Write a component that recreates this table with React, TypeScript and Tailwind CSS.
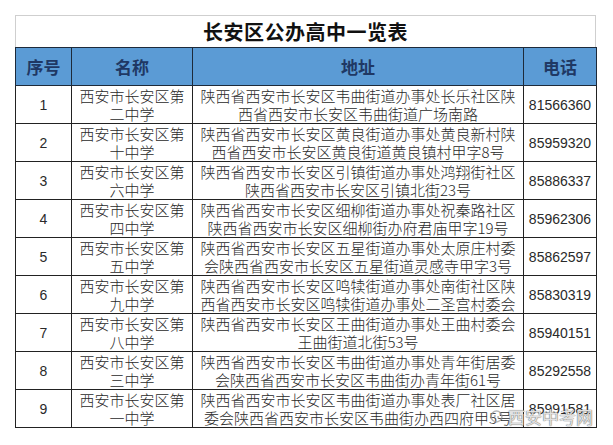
const rows = [
  { no: '1', name: ['西安市长安区第', '二中学'], addr: ['陕西省西安市长安区韦曲街道办事处长乐社区陕', '西省西安市长安区韦曲街道广场南路'], tel: '81566360' },
  { no: '2', name: ['西安市长安区第', '十中学'], addr: ['陕西省西安市长安区黄良街道办事处黄良新村陕', '西省西安市长安区黄良街道黄良镇村甲字8号'], tel: '85959320' },
  { no: '3', name: ['西安市长安区第', '六中学'], addr: ['陕西省西安市长安区引镇街道办事处鸿翔街社区', '陕西省西安市长安区引镇北街23号'], tel: '85886337' },
  { no: '4', name: ['西安市长安区第', '四中学'], addr: ['陕西省西安市长安区细柳街道办事处祝秦路社区', '陕西省西安市长安区细柳街办府君庙甲字19号'], tel: '85962306' },
  { no: '5', name: ['西安市长安区第', '五中学'], addr: ['陕西省西安市长安区五星街道办事处太原庄村委', '会陕西省西安市长安区五星街道灵感寺甲字3号'], tel: '85862597' },
  { no: '6', name: ['西安市长安区第', '九中学'], addr: ['陕西省西安市长安区鸣犊街道办事处南街社区陕', '西省西安市长安区鸣犊街道办事处二圣宫村委会'], tel: '85830319' },
  { no: '7', name: ['西安市长安区第', '八中学'], addr: ['陕西省西安市长安区王曲街道办事处王曲村委会', '王曲街道北街53号'], tel: '85940151' },
  { no: '8', name: ['西安市长安区第', '三中学'], addr: ['陕西省西安市长安区韦曲街道办事处青年街居委', '会陕西省西安市长安区韦曲街办青年街61号'], tel: '85292558' },
  { no: '9', name: ['西安市长安区第', '一中学'], addr: ['陕西省西安市长安区韦曲街道办事处表厂社区居', '委会陕西省西安市长安区韦曲街办西四府甲5号'], tel: '85991581' },
]

const cjk = { fontFamily: '"Noto Sans CJK SC", "Noto Sans", sans-serif' }
const num = { fontFamily: '"Liberation Sans", "DejaVu Sans", sans-serif' }

export default function App() {
  return (
    <div className="min-h-[445px] w-[613px] bg-white pl-[15px] pt-[15px]" style={cjk}>
      <div className="relative w-[581px]">
        <div className="flex h-[32px] items-center justify-center border border-b-0 border-[#cfcfcf]">
          <span className="text-[20px] font-semibold leading-none tracking-[0.5px] text-[#111]">
            长安区公办高中一览表
          </span>
        </div>
        <table className="w-[581px] table-fixed border-collapse">
          <colgroup>
            <col className="w-[56px]" />
            <col className="w-[121px]" />
            <col className="w-[331px]" />
            <col className="w-[73px]" />
          </colgroup>
          <thead>
            <tr className="h-[38px] bg-[#5b9bd5] text-[17px] font-bold text-[#1f3864]">
              <th className="border border-[#1d2a3a] p-0">序号</th>
              <th className="border border-[#1d2a3a] p-0">名称</th>
              <th className="border border-[#1d2a3a] p-0">地址</th>
              <th className="border border-[#1d2a3a] p-0">电话</th>
            </tr>
          </thead>
          <tbody className="text-[15px] font-light leading-[18px] text-[#2a2a2a]">
            {rows.map((r) => (
              <tr key={r.no} className="h-[38px]">
                <td className="border border-[#222] p-0 text-center text-[14px] font-normal" style={num}>
                  {r.no}
                </td>
                <td className="border border-[#222] p-0 text-center whitespace-nowrap">
                  <div>{r.name[0]}</div>
                  <div>{r.name[1]}</div>
                </td>
                <td className="border border-[#222] p-0 text-center whitespace-nowrap">
                  <div>{r.addr[0]}</div>
                  <div>{r.addr[1]}</div>
                </td>
                <td className="border border-[#222] p-0 text-center text-[14px] font-normal" style={num}>
                  {r.tel}
                </td>
              </tr>
            ))}
          </tbody>
        </table>
        <div className="absolute bottom-[3px] right-[3px] flex items-center gap-[5px] text-[17px] leading-none text-white/80 [text-shadow:0_0_1px_#666,0_0_1px_#666]">
          <svg width="13" height="13" viewBox="0 0 12 12" className="opacity-70">
            <circle cx="6" cy="6" r="5" fill="none" stroke="#999" strokeWidth="1.4" />
            <circle cx="4.5" cy="5.5" r="1" fill="#999" />
            <circle cx="7.5" cy="6.5" r="1" fill="#999" />
          </svg>
          <span>西安中考网</span>
        </div>
      </div>
    </div>
  )
}
